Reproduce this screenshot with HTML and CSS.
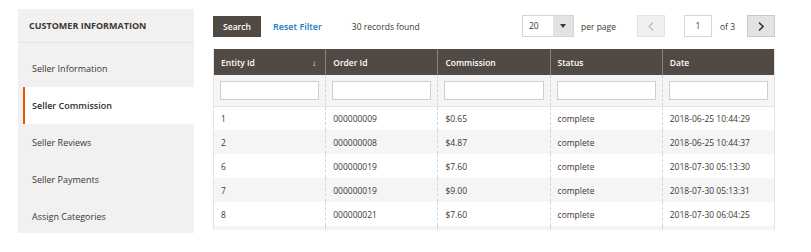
FILE: index.html
```html
<!DOCTYPE html>
<html>
<head>
<meta charset="utf-8">
<link rel="stylesheet" href="styles.css">
</head>
<body>
<div class="page">
  <aside class="nav">
    <div class="nav-title">CUSTOMER INFORMATION</div>
    <ul class="nav-list">
      <li class="nav-item">Seller Information</li>
      <li class="nav-item active">Seller Commission</li>
      <li class="nav-item">Seller Reviews</li>
      <li class="nav-item">Seller Payments</li>
      <li class="nav-item">Assign Categories</li>
    </ul>
  </aside>
  <main class="main">
    <div class="toolbar">
      <button class="btn-search">Search</button>
      <a class="reset">Reset Filter</a>
      <span class="found">30 records found</span>
      <div class="pager">
        <div class="limit">
          <span class="limit-val">20</span>
          <span class="limit-btn"><svg width="6" height="4" viewBox="0 0 6 4"><path d="M0 0h6L3 4z" fill="#41362f"/></svg></span>
        </div>
        <span class="per">per page</span>
        <button class="pg prev"><svg width="6" height="9" viewBox="0 0 6 9"><path d="M5 0.5L1 4.5l4 4" fill="none" stroke="#bbb" stroke-width="1.2"/></svg></button>
        <span class="page-input">1</span>
        <span class="of">of 3</span>
        <button class="pg next"><svg width="6" height="9" viewBox="0 0 6 9"><path d="M1 0.5l4 4-4 4" fill="none" stroke="#41362f" stroke-width="1.6"/></svg></button>
      </div>
    </div>
    <table class="grid">
      <thead>
        <tr class="head">
          <th><span class="th-in">Entity Id<span class="sort">↓</span></span></th>
          <th>Order Id</th>
          <th>Commission</th>
          <th>Status</th>
          <th>Date</th>
        </tr>
        <tr class="filters">
          <td><div class="finput"></div></td>
          <td><div class="finput"></div></td>
          <td><div class="finput"></div></td>
          <td><div class="finput"></div></td>
          <td><div class="finput"></div></td>
        </tr>
      </thead>
      <tbody>
        <tr><td>1</td><td>000000009</td><td>$0.65</td><td>complete</td><td>2018-06-25 10:44:29</td></tr>
        <tr class="alt"><td>2</td><td>000000008</td><td>$4.87</td><td>complete</td><td>2018-06-25 10:44:37</td></tr>
        <tr><td>6</td><td>000000019</td><td>$7.60</td><td>complete</td><td>2018-07-30 05:13:30</td></tr>
        <tr class="alt"><td>7</td><td>000000019</td><td>$9.00</td><td>complete</td><td>2018-07-30 05:13:31</td></tr>
        <tr><td>8</td><td>000000021</td><td>$7.60</td><td>complete</td><td>2018-07-30 06:04:25</td></tr>
        <tr class="alt cut"><td></td><td></td><td></td><td></td><td></td></tr>
      </tbody>
    </table>
  </main>
</div>
</body>
</html>
```

FILE: styles.css
```css
* { box-sizing: border-box; }
html, body { margin: 0; padding: 0; background: #fff; }
body {
  font-family: "Open Sans", "Noto Sans", sans-serif;
  color: #41362f;
  width: 811px;
  height: 252px;
  overflow: hidden;
}
.page {
  display: flex;
  padding: 9px 0 0 18px;
}
.nav {
  width: 176px;
  height: 224px;
  background: #f1f1f1;
  flex-shrink: 0;
}
.nav-title {
  height: 34px;
  line-height: 34px;
  padding-left: 11px;
  font-size: 9px;
  font-weight: 700;
  color: #41362f;
  border-bottom: 1px solid #e3e3e3;
}
.nav-list {
  list-style: none;
  margin: 0;
  padding: 7px 0 0 0;
}
.nav-item {
  height: 37px;
  line-height: 37px;
  padding-left: 14px;
  font-size: 9px;
  color: #41362f;
}
.nav-item.active {
  background: #fff;
  margin-left: 5px;
  padding-left: 7px;
  border-left: 2px solid #eb5202;
  font-weight: 600;
  color: #303030;
}
.main {
  margin-left: 19px;
  width: 562px;
  padding-top: 6px;
}
.toolbar {
  display: flex;
  align-items: center;
  height: 22px;
  font-size: 8.5px;
}
.btn-search {
  height: 21px;
  width: 48px;
  padding: 0;
  border: 1px solid #514943;
  background: #514943;
  color: #fff;
  font-family: inherit;
  font-size: 8.5px;
  font-weight: 600;
}
.reset {
  margin-left: 12px;
  color: #1979c3;
  font-weight: 600;
  font-size: 9px;
}
.found {
  margin-left: 30px;
  color: #41362f;
}
.pager {
  margin-left: auto;
  display: flex;
  align-items: center;
}
.limit {
  display: flex;
  height: 22px;
  width: 52px;
  border: 1px solid #d6d6d6;
}
.limit-val {
  width: 30px;
  background: #fff;
  padding-left: 6px;
  line-height: 20px;
}
.limit-btn {
  flex: 1;
  background: #e3e3e3;
  display: flex;
  align-items: center;
  justify-content: center;
}
.per { margin-left: 7px; }
.pg {
  width: 28px;
  height: 22px;
  padding: 0;
  display: flex;
  align-items: center;
  justify-content: center;
  border: 1px solid #d6d6d6;
}
.prev { margin-left: 21px; background: #f0f0f0; border-color: #e3e3e3; }
.next { margin-left: 12px; background: #e3e3e3; border-color: #c9c9c9; }
.page-input {
  margin-left: 19px;
  width: 28px;
  height: 22px;
  border: 1px solid #d6d6d6;
  text-align: center;
  line-height: 20px;
  background: #fff;
}
.of { margin-left: 8px; }
.grid {
  margin-top: 12px;
  width: 562px;
  border-collapse: collapse;
  table-layout: fixed;
  font-size: 8.5px;
  border-left: 1px solid #e3e3e3;
  border-right: 1px solid #e3e3e3;
}
.grid th {
  background: #514943;
  color: #fff;
  font-weight: 600;
  font-size: 8.5px;
  text-align: left;
  height: 26px;
  padding: 0 7px;
  border-left: 1px solid #8a837f;
}
.grid th:first-child { border-left: none; }
.th-in { display: flex; justify-content: space-between; }
.sort { font-weight: 400; margin-right: 2px; }
.filters td {
  background: #f5f5f5;
  height: 31px;
  padding: 0 6px 0 6px;
  border-left: 1px dashed #d6d6d6;
  border-bottom: 1px solid #e3e3e3;
}
.filters td:first-child { border-left: none; }
.finput {
  height: 19px;
  background: #fff;
  border: 1px solid #cfcfcf;
}
.grid tbody td {
  height: 24px;
  padding: 0 7px;
  color: #41362f;
  border-left: 1px dashed #d6d6d6;
  white-space: nowrap;
}
.grid tbody td:first-child { border-left: none; }
.grid tbody tr.alt td { background: #f5f5f5; }
.grid tbody tr.cut td { height: 4px; }
```
